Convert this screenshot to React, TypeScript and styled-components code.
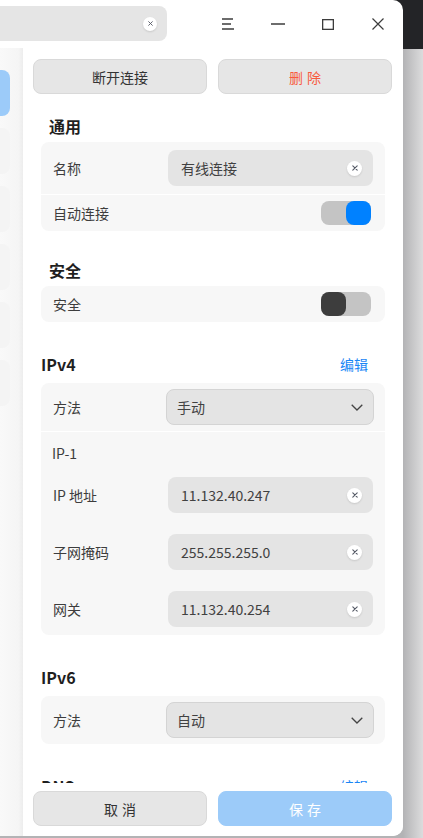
import styled, { createGlobalStyle } from "styled-components";

const GlobalStyle = createGlobalStyle`
  html, body {
    margin: 0;
    padding: 0;
  }
  body {
    font-family: "Noto Sans CJK SC", "Noto Sans", sans-serif;
    color: #414141;
  }
  * {
    box-sizing: border-box;
  }
`;

const Page = styled.div`
  width: 423px;
  height: 838px;
  overflow: hidden;
  background: linear-gradient(#232427 0 49px, transparent 49px),
    linear-gradient(to right, #b3b3b5 403px, #dcdcdd 423px);
`;

const Win = styled.div`
  width: 403px;
  height: 836px;
  background: #fff;
  border-radius: 0 10px 10px 0;
  display: flex;
  flex-direction: column;
  overflow: hidden;
`;

const TitleBar = styled.div`
  height: 48px;
  display: flex;
  align-items: flex-start;
`;

const Search = styled.div`
  width: 167px;
  height: 35px;
  margin-top: 6px;
  background: #e5e5e5;
  border-radius: 0 8px 8px 0;
  display: flex;
  align-items: center;
  justify-content: flex-end;
  padding-right: 10px;
`;

const WinButtons = styled.div`
  margin-left: auto;
  display: flex;
`;

const WinButton = styled.div`
  width: 50px;
  height: 48px;
  display: flex;
  align-items: center;
  justify-content: center;
  color: #3c3c3c;
`;

const Body = styled.div`
  flex: 1;
  display: flex;
  min-height: 0;
`;

const Sidebar = styled.div`
  width: 23px;
  padding-top: 22px;
  background: linear-gradient(to right, #f9f9f9, #f5f5f5 80%, #ededed);
  display: flex;
  flex-direction: column;
  gap: 12px;
`;

const SideItem = styled.div<{ $active?: boolean }>`
  width: 10px;
  height: 46px;
  border-radius: 0 8px 8px 0;
  background: ${(p) => (p.$active ? "#9ccbf9" : "#f4f4f4")};
`;

const Main = styled.div`
  flex: 1;
  display: flex;
  flex-direction: column;
  min-width: 0;
`;

const ActionBar = styled.div<{ $bottom?: boolean }>`
  display: flex;
  gap: 11px;
  padding: ${(p) => (p.$bottom ? "8px 10px 10px" : "11px 10px 6px")};
  background: #fff;
`;

const Button = styled.div<{ $tone?: "danger" | "primary"; $spaced?: boolean }>`
  width: 174px;
  height: 35px;
  border-radius: 8px;
  display: flex;
  align-items: center;
  justify-content: center;
  font-size: 14px;
  letter-spacing: ${(p) => (p.$spaced ? "4px" : "0")};
  padding-left: ${(p) => (p.$spaced ? "4px" : "0")};
  background: ${(p) => (p.$tone === "primary" ? "#9ccbf9" : "#e6e6e6")};
  border: 1px solid ${(p) => (p.$tone === "primary" ? "#9ccbf9" : "#d9d9d9")};
  color: ${(p) =>
    p.$tone === "danger" ? "#f85a3e" : p.$tone === "primary" ? "#fff" : "#333"};
`;

const Scroll = styled.div`
  flex: 1;
  overflow: hidden;
  padding: 14px 18px 0;
  display: flex;
  flex-direction: column;
  gap: 27px;
`;

const Section = styled.div`
  display: flex;
  flex-direction: column;
  gap: 4px;
`;

const Heading = styled.div<{ $indent: number; $tall?: boolean }>`
  height: ${(p) => (p.$tall ? 30 : 24)}px;
  flex-shrink: 0;
  display: flex;
  align-items: center;
  justify-content: space-between;
  padding: 0 17px 0 ${(p) => p.$indent}px;
  font-size: 16px;
  font-weight: 700;
  color: #1f1f1f;
`;

const EditLink = styled.span`
  font-size: 14px;
  font-weight: 400;
  color: #1a86f5;
`;

const Card = styled.div`
  background: #f7f7f7;
  border-radius: 8px;
  display: flex;
  flex-direction: column;
  flex-shrink: 0;
`;

const Row = styled.div<{ $h: number; $divided?: boolean }>`
  height: ${(p) => p.$h}px;
  display: flex;
  align-items: center;
  justify-content: space-between;
  padding: 0 12px;
  font-size: 14px;
  color: #3d3d3d;
  border-top: ${(p) => (p.$divided ? "1px solid #fff" : "none")};
`;

const SubGroup = styled.div`
  border-top: 1px solid #fff;
  padding: 10px 0 8px;
  display: flex;
  flex-direction: column;
`;

const SubTitle = styled.div`
  height: 22px;
  line-height: 22px;
  padding-left: 11px;
  font-size: 14px;
  color: #3d3d3d;
  margin-bottom: 13px;
`;

const SubRows = styled.div`
  display: flex;
  flex-direction: column;
  gap: 21px;
`;

const Field = styled.div`
  width: 205px;
  height: 36px;
  border-radius: 8px;
  background: #e4e4e4;
  display: flex;
  align-items: center;
  justify-content: space-between;
  padding: 0 11px 0 13px;
  font-size: 14px;
  color: #414141;
`;

const ClearDot = styled.div<{ $size?: number }>`
  width: ${(p) => p.$size ?? 15}px;
  height: ${(p) => p.$size ?? 15}px;
  border-radius: 50%;
  background: #fff;
  box-shadow: 0 1px 2px rgba(0, 0, 0, 0.12);
  display: flex;
  align-items: center;
  justify-content: center;
  color: #555a66;
`;

const Select = styled.div`
  width: 208px;
  height: 36px;
  margin-right: -1px;
  border-radius: 8px;
  background: #e4e4e4;
  border: 1px solid #d4d4d4;
  display: flex;
  align-items: center;
  justify-content: space-between;
  padding: 0 10px;
  font-size: 14px;
  color: #414141;
`;

const Track = styled.div<{ $on?: boolean }>`
  width: 50px;
  height: 24px;
  margin-right: 2px;
  border-radius: 8px;
  background: #c4c4c4;
  display: flex;
  justify-content: ${(p) => (p.$on ? "flex-end" : "flex-start")};
`;

const Knob = styled.div<{ $on?: boolean }>`
  width: 25px;
  height: 24px;
  border-radius: 8px;
  background: ${(p) => (p.$on ? "#0081ff" : "#3d3d3d")};
`;

function Cross({ size = 6 }: { size?: number }) {
  return (
    <svg width={size} height={size} viewBox="0 0 6 6">
      <path d="M0.8 0.8 L5.2 5.2 M5.2 0.8 L0.8 5.2" stroke="currentColor" strokeWidth="1.1" strokeLinecap="round" />
    </svg>
  );
}

function Chevron() {
  return (
    <svg width="12" height="7" viewBox="0 0 12 7">
      <path d="M0.7 0.7 L6 6 L11.3 0.7" fill="none" stroke="#444" strokeWidth="1.3" />
    </svg>
  );
}

function Input({ value }: { value: string }) {
  return (
    <Field>
      <span>{value}</span>
      <ClearDot>
        <Cross />
      </ClearDot>
    </Field>
  );
}

function Toggle({ on }: { on?: boolean }) {
  return (
    <Track $on={on}>
      <Knob $on={on} />
    </Track>
  );
}

function Dropdown({ value }: { value: string }) {
  return (
    <Select>
      <span>{value}</span>
      <Chevron />
    </Select>
  );
}

export default function App() {
  return (
    <Page>
      <GlobalStyle />
      <Win>
        <TitleBar>
          <Search>
            <ClearDot $size={14}>
              <Cross size={5} />
            </ClearDot>
          </Search>
          <WinButtons>
            <WinButton>
              <svg width="13" height="12" viewBox="0 0 13 12">
                <path d="M0 1 H11 M0 6 H9 M0 11 H12" stroke="currentColor" strokeWidth="1.3" />
              </svg>
            </WinButton>
            <WinButton>
              <svg width="14" height="2" viewBox="0 0 14 2">
                <path d="M0 1 H14" stroke="currentColor" strokeWidth="1.3" />
              </svg>
            </WinButton>
            <WinButton>
              <svg width="12" height="11" viewBox="0 0 12 11">
                <rect x="0.65" y="0.65" width="10.7" height="9.7" fill="none" stroke="currentColor" strokeWidth="1.3" />
              </svg>
            </WinButton>
            <WinButton>
              <svg width="12" height="12" viewBox="0 0 12 12">
                <path d="M0.5 0.5 L11.5 11.5 M11.5 0.5 L0.5 11.5" stroke="currentColor" strokeWidth="1.2" />
              </svg>
            </WinButton>
          </WinButtons>
        </TitleBar>
        <Body>
          <Sidebar>
            <SideItem $active />
            <SideItem />
            <SideItem />
            <SideItem />
            <SideItem />
            <SideItem />
          </Sidebar>
          <Main>
            <ActionBar>
              <Button>断开连接</Button>
              <Button $tone="danger" $spaced>删除</Button>
            </ActionBar>
            <Scroll>
              <Section>
                <Heading $indent={8}>通用</Heading>
                <Card>
                  <Row $h={52}>
                    <span>名称</span>
                    <Input value="有线连接" />
                  </Row>
                  <Row $h={37} $divided>
                    <span>自动连接</span>
                    <Toggle on />
                  </Row>
                </Card>
              </Section>
              <Section>
                <Heading $indent={8}>安全</Heading>
                <Card>
                  <Row $h={36}>
                    <span>安全</span>
                    <Toggle />
                  </Row>
                </Card>
              </Section>
              <Section>
                <Heading $indent={0} $tall>
                  <span>IPv4</span>
                  <EditLink>编辑</EditLink>
                </Heading>
                <Card>
                  <Row $h={48}>
                    <span>方法</span>
                    <Dropdown value="手动" />
                  </Row>
                  <SubGroup>
                    <SubTitle>IP-1</SubTitle>
                    <SubRows>
                      <Row $h={36}>
                        <span>IP 地址</span>
                        <Input value="11.132.40.247" />
                      </Row>
                      <Row $h={36}>
                        <span>子网掩码</span>
                        <Input value="255.255.255.0" />
                      </Row>
                      <Row $h={36}>
                        <span>网关</span>
                        <Input value="11.132.40.254" />
                      </Row>
                    </SubRows>
                  </SubGroup>
                </Card>
              </Section>
              <Section>
                <Heading $indent={0} $tall>
                  <span>IPv6</span>
                </Heading>
                <Card>
                  <Row $h={48}>
                    <span>方法</span>
                    <Dropdown value="自动" />
                  </Row>
                </Card>
              </Section>
              <Section>
                <Heading $indent={0} $tall>
                  <span>DNS</span>
                  <EditLink>编辑</EditLink>
                </Heading>
              </Section>
            </Scroll>
            <ActionBar $bottom>
              <Button $spaced>取消</Button>
              <Button $tone="primary" $spaced>保存</Button>
            </ActionBar>
          </Main>
        </Body>
      </Win>
    </Page>
  );
}
